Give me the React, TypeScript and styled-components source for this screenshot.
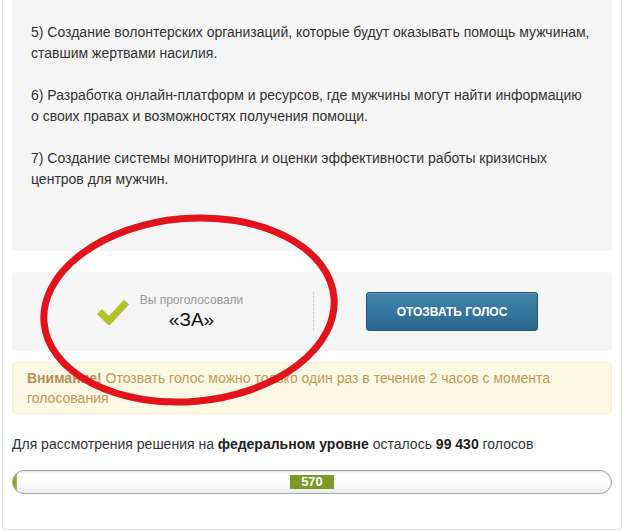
import React from "react";
import styled, { createGlobalStyle } from "styled-components";

const Global = createGlobalStyle`
  html, body { margin: 0; padding: 0; background: #ffffff; }
  body { font-family: "Liberation Sans", Arial, sans-serif; color: #333333; }
`;

const Page = styled.div`
  position: relative;
  width: 624px;
  height: 531px;
  overflow: hidden;
`;

const Card = styled.div`
  margin: 0 2px;
  border: 1px solid #dddddd;
  border-top: none;
  border-radius: 0 0 4px 4px;
  padding: 0 9px 35px 9px;
  background: #ffffff;
`;

const Content = styled.div`
  background: #f5f5f5;
  border-radius: 0 0 4px 4px;
  padding: 22px 20px 61px 19px;
  font-size: 14px;
  line-height: 21px;
  color: #333333;
`;

const Para = styled.p`
  margin: 0 0 21px 0;
  &:last-child { margin-bottom: 0; }
`;

const VotePanel = styled.div`
  margin-top: 21px;
  height: 79px;
  background: #f5f5f5;
  border-radius: 4px;
  display: grid;
  grid-template-columns: 301px 1px 1fr;
  align-items: center;
`;

const VotedCol = styled.div`
  display: flex;
  align-items: center;
  justify-content: center;
  gap: 11px;
  padding-left: 15px;
`;

const VotedText = styled.div`
  display: flex;
  flex-direction: column;
  align-items: center;
`;

const VotedLabel = styled.span`
  font-size: 12px;
  line-height: 14px;
  color: #999999;
`;

const VotedValue = styled.span`
  font-size: 19px;
  line-height: 22px;
  color: #111111;
  margin-top: 2px;
`;

const Divider = styled.div`
  height: 39px;
  border-left: 1px dotted #bbbbbb;
`;

const ActionCol = styled.div`
  display: flex;
  justify-content: center;
  padding-right: 22px;
`;

const RevokeButton = styled.button`
  width: 172px;
  height: 39px;
  border: 1px solid #1f5678;
  border-radius: 3px;
  background: linear-gradient(#4285ad, #2a6690);
  box-shadow: inset 0 1px 0 rgba(255, 255, 255, 0.2);
  color: #ffffff;
  font-family: "Liberation Sans", Arial, sans-serif;
  font-weight: bold;
  font-size: 12px;
  text-transform: uppercase;
  cursor: pointer;
`;

const Warning = styled.div`
  margin-top: 11px;
  background: #fcf8e3;
  border: 1px solid #f8eed2;
  border-radius: 4px;
  padding: 5px 14px 5px 14px;
  font-size: 14px;
  line-height: 20px;
  color: #c09a5b;
  b { color: #b89157; }
`;

const Remaining = styled.div`
  margin-top: 20px;
  font-size: 14px;
  line-height: 20px;
  color: #333333;
  b { color: #222222; }
`;

const Progress = styled.div`
  position: relative;
  margin-top: 16px;
  height: 22px;
  border: 1px solid #a5a5a5;
  border-radius: 12px;
  background: linear-gradient(#ffffff 0%, #ffffff 45%, #ececec 100%);
  box-shadow: inset 0 1px 2px rgba(0, 0, 0, 0.12);
  display: flex;
  align-items: center;
  justify-content: center;
  overflow: hidden;
`;

const Fill = styled.div`
  position: absolute;
  left: 0;
  top: 0;
  bottom: 0;
  background: linear-gradient(90deg, #6f8f1f, #a7c04a);
  border-radius: 12px 0 0 12px;
`;

const Count = styled.span`
  position: relative;
  background: #7b9a28;
  color: #ffffff;
  font-weight: bold;
  font-size: 13px;
  line-height: 14px;
  padding: 0 10px;
  width: 24px;
  text-align: center;
`;

const Annotation = styled.svg`
  position: absolute;
  left: 0;
  top: 0;
  pointer-events: none;
`;

const CheckIcon = () => (
  <svg width="32" height="26" viewBox="0 0 32 26">
    <polyline
      points="2.5,12.5 12,22 29.5,3"
      fill="none"
      stroke="#b4c02c"
      strokeWidth="7"
      strokeLinejoin="miter"
    />
  </svg>
);

export default function App() {
  const percent = 0.57;
  return (
    <Page>
      <Global />
      <Card>
        <Content>
          <Para>
            5) Создание волонтерских организаций, которые будут оказывать помощь мужчинам,
            ставшим жертвами насилия.
          </Para>
          <Para>
            6) Разработка онлайн-платформ и ресурсов, где мужчины могут найти информацию
            о своих правах и возможностях получения помощи.
          </Para>
          <Para>
            7) Создание системы мониторинга и оценки эффективности работы кризисных
            центров для мужчин.
          </Para>
        </Content>
        <VotePanel>
          <VotedCol>
            <CheckIcon />
            <VotedText>
              <VotedLabel>Вы проголосовали</VotedLabel>
              <VotedValue>«ЗА»</VotedValue>
            </VotedText>
          </VotedCol>
          <Divider />
          <ActionCol>
            <RevokeButton>Отозвать голос</RevokeButton>
          </ActionCol>
        </VotePanel>
        <Warning>
          <b>Внимание!</b> Отозвать голос можно только один раз в течение 2 часов с момента
          голосования
        </Warning>
        <Remaining>
          Для рассмотрения решения на <b>федеральном уровне</b> осталось <b>99 430</b> голосов
        </Remaining>
        <Progress>
          <Fill style={{ width: `${Math.max(percent, 0.6)}%` }} />
          <Count>570</Count>
        </Progress>
      </Card>
      <Annotation width="624" height="531" viewBox="0 0 624 531">
        <ellipse
          cx="189"
          cy="310"
          rx="145.5"
          ry="91.5"
          fill="none"
          stroke="#e3131b"
          strokeWidth="7"
          transform="rotate(-5 189 310)"
        />
      </Annotation>
    </Page>
  );
}
